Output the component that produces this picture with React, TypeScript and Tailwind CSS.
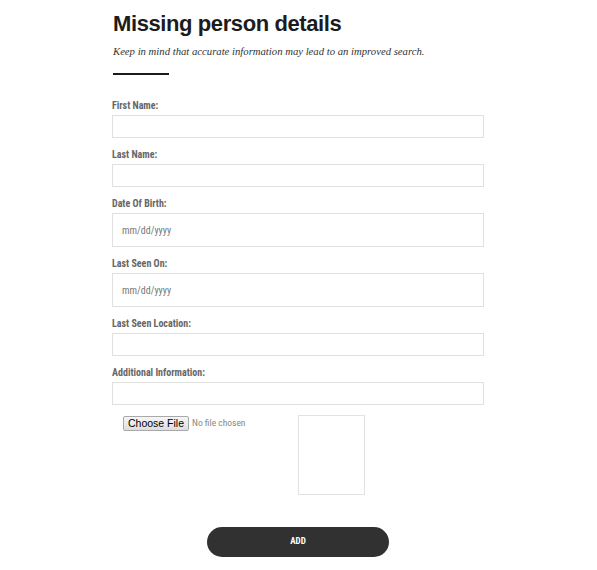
import React from "react";

const labelFont =
  "font-['Liberation_Sans_Narrow','Roboto_Condensed','DejaVu_Sans_Condensed',Roboto,sans-serif]";

type FieldProps = {
  label: string;
  tall?: boolean;
  placeholder?: string;
};

const Field = ({ label, tall, placeholder }: FieldProps) => {
  return (
    <div className="flex flex-col mb-[11px]">
      <label className={`${labelFont} text-[10px] leading-[12px] font-bold text-[#666] mb-[3px]`}>
        {label}
      </label>
      <div
        className={`w-full ${tall ? "h-[34px]" : "h-[23px]"} border border-[#e0e0e0] bg-white flex items-center px-[9px]`}
      >
        {placeholder && (
          <span className={`${labelFont} text-[10px] text-[#777]`}>{placeholder}</span>
        )}
      </div>
    </div>
  );
};

export default function App() {
  return (
    <div className="w-[597px] h-[570px] bg-white font-['Liberation_Sans',Arial,sans-serif]">
      <div className="w-[372px] ml-[112px] flex flex-col">
        <h1 className="pt-[11px] pl-[1px] text-[22px] leading-[26px] font-bold tracking-[-0.4px] text-[#1c1c1c]">
          Missing person details
        </h1>
        <p className="mt-[7px] pl-[1px] font-['Liberation_Serif',serif] italic text-[10.7px] leading-[14px] text-[#333]">
          Keep in mind that accurate information may lead to an improved search.
        </p>
        <div className="mt-[15px] ml-[1px] w-[56px] h-[2px] bg-[#1c1c1c]" />
        <form className="mt-[25px] flex flex-col">
          <Field label="First Name:" />
          <Field label="Last Name:" />
          <Field label="Date Of Birth:" tall placeholder="mm/dd/yyyy" />
          <Field label="Last Seen On:" tall placeholder="mm/dd/yyyy" />
          <Field label="Last Seen Location:" />
          <Field label="Additional Information:" />
          <div className="flex items-start mt-[-1px] pl-[11px]">
            <div className="w-[175px] flex items-center pt-[1px]">
              <span className="h-[15px] px-[4px] flex items-center border border-[#a9a9a9] rounded-[2px] bg-gradient-to-b from-[#f6f6f6] to-[#dedede] text-[10.5px] text-black">
                Choose File
              </span>
              <span className={`${labelFont} ml-[3px] text-[9.5px] text-[#888]`}>No file chosen</span>
            </div>
            <div className="w-[67px] h-[80px] border border-[#e2e2e2]" />
          </div>
          <div className="flex justify-center mt-[32px] ml-[-91px] w-[554px]">
            <button
              type="button"
              className={`${labelFont} w-[182px] h-[30px] rounded-full bg-[#313131] text-white text-[9px] font-bold`}
            >
              ADD
            </button>
          </div>
        </form>
      </div>
    </div>
  );
}
